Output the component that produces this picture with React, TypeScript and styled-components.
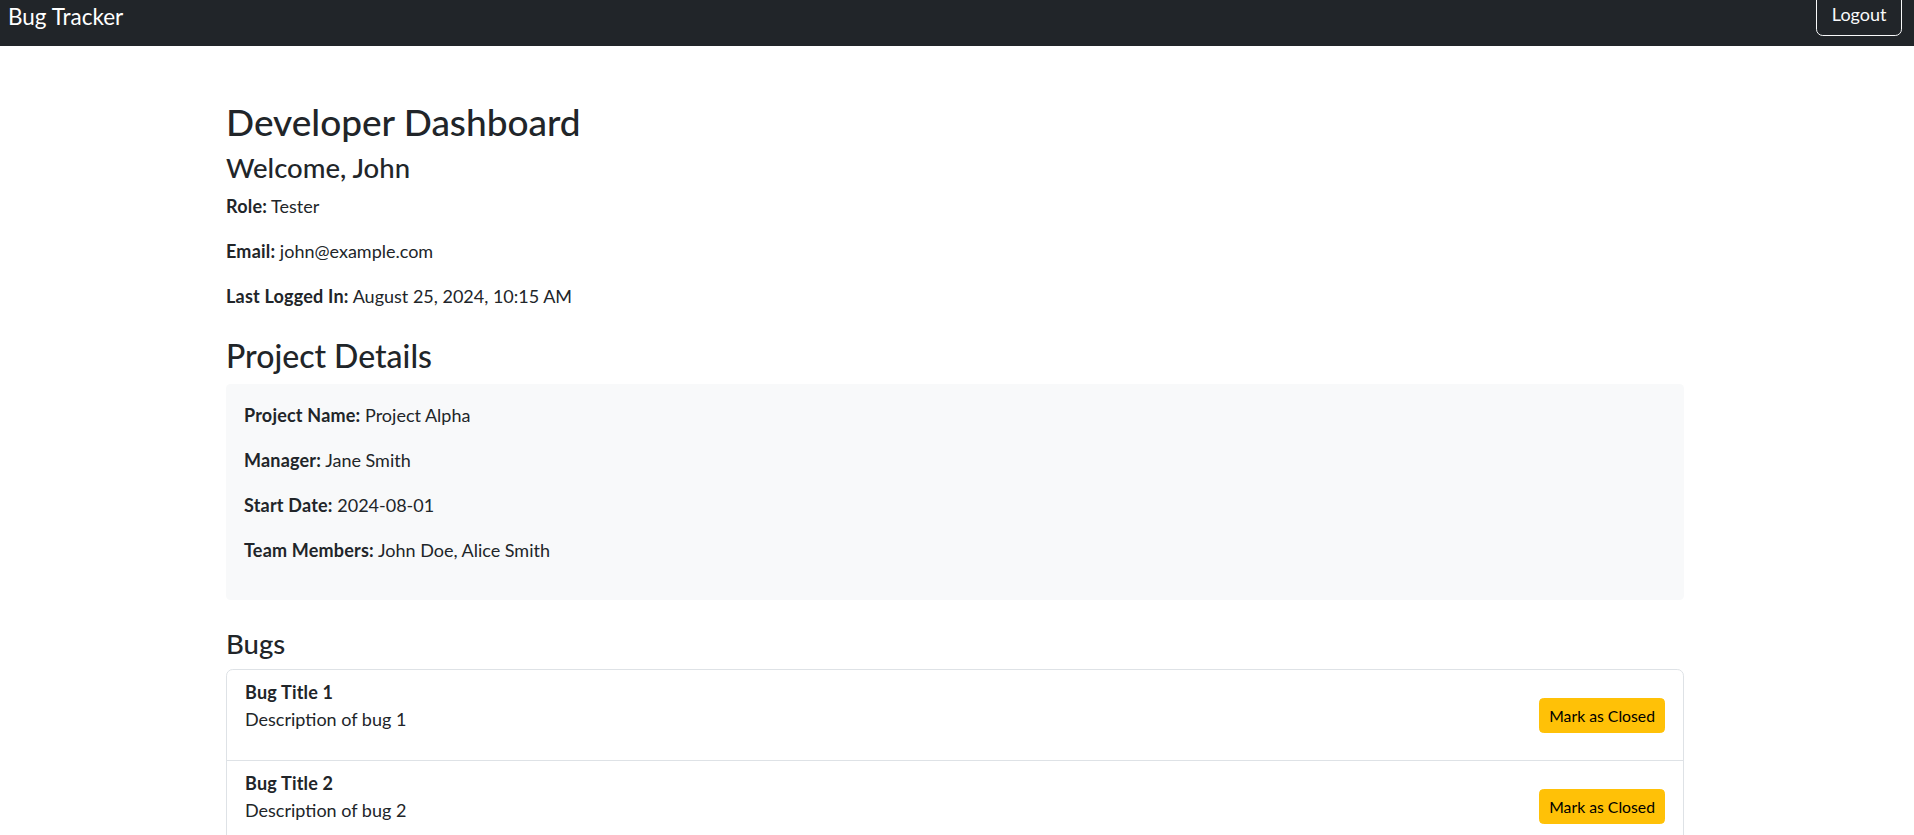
import React from "react";
import styled, { createGlobalStyle } from "styled-components";

const GlobalStyle = createGlobalStyle`
  * { box-sizing: border-box; }
  html, body { margin: 0; padding: 0; background: #ffffff; }
  body {
    font-family: Lato, "Noto Sans", sans-serif;
    font-size: 18px;
    line-height: 27px;
    color: #212529;
    overflow: hidden;
  }
`;

const Navbar = styled.nav`
  display: flex;
  align-items: center;
  justify-content: space-between;
  height: 63px;
  margin-top: -17px;
  padding: 0 12px 0 8px;
  background: #212529;
`;

const Brand = styled.span`
  font-size: 22.5px;
  line-height: 34px;
  color: #ffffff;
  padding-top: 4px;
`;

const OutlineButton = styled.button`
  font-family: inherit;
  font-size: 18px;
  line-height: 27px;
  padding: 6.75px 14.5px;
  color: #f8f9fa;
  background: transparent;
  border: 1px solid #f8f9fa;
  border-radius: 6.75px;
  cursor: pointer;
`;

const Container = styled.main`
  max-width: 1462px;
  margin: 52px auto 0;
  padding-right: 4px;
`;

const Title = styled.h1`
  font-size: 37px;
  line-height: 48px;
  font-weight: 500;
  margin: 0 0 5px;
`;

const SubHeading = styled.h3<{ $top?: number }>`
  font-size: 27.5px;
  line-height: 33px;
  font-weight: 500;
  margin: ${(p) => p.$top ?? 0}px 0 9px;
`;

const SectionHeading = styled.h2`
  font-size: 32px;
  line-height: 38.4px;
  font-weight: 500;
  margin: 27px 0 9px;
`;

const Para = styled.p`
  margin: 0 0 18px;
`;

const Label = styled.strong`
  font-weight: 700;
  letter-spacing: 0.2px;
`;

const DetailsBox = styled.section`
  background: #f8f9fa;
  border-radius: 4.5px;
  padding: 18px;
`;

const BugList = styled.ul`
  list-style: none;
  margin: 0;
  padding: 0;
  border: 1px solid #dee2e6;
  border-radius: 6.75px;
`;

const BugItem = styled.li`
  display: flex;
  align-items: center;
  justify-content: space-between;
  padding: 9px 18px;
  & + & {
    border-top: 1px solid #dee2e6;
  }
`;

const BugText = styled.div`
  display: flow-root;
`;

const BugTitle = styled.strong`
  display: block;
  font-weight: 700;
  letter-spacing: 0.2px;
`;

const WarningButton = styled.button`
  font-family: inherit;
  font-size: 15.75px;
  line-height: 23.6px;
  padding: 4.5px 9px;
  color: #000000;
  background: #ffc107;
  border: 1px solid #ffc107;
  border-radius: 4.5px;
  cursor: pointer;
`;

const bugs = [
  { title: "Bug Title 1", description: "Description of bug 1" },
  { title: "Bug Title 2", description: "Description of bug 2" },
  { title: "Bug Title 3", description: "Description of bug 3" },
];

export default function App() {
  return (
    <>
      <GlobalStyle />
      <Navbar>
        <Brand>Bug Tracker</Brand>
        <OutlineButton>Logout</OutlineButton>
      </Navbar>
      <Container>
        <Title>Developer Dashboard</Title>
        <SubHeading>Welcome, John</SubHeading>
        <Para>
          <Label>Role:</Label> Tester
        </Para>
        <Para>
          <Label>Email:</Label> john@example.com
        </Para>
        <Para>
          <Label>Last Logged In:</Label> August 25, 2024, 10:15 AM
        </Para>

        <SectionHeading>Project Details</SectionHeading>
        <DetailsBox>
          <Para>
            <Label>Project Name:</Label> Project Alpha
          </Para>
          <Para>
            <Label>Manager:</Label> Jane Smith
          </Para>
          <Para>
            <Label>Start Date:</Label> 2024-08-01
          </Para>
          <Para>
            <Label>Team Members:</Label> John Doe, Alice Smith
          </Para>
        </DetailsBox>

        <SubHeading $top={27}>Bugs</SubHeading>
        <BugList>
          {bugs.map((b) => (
            <BugItem key={b.title}>
              <BugText>
                <BugTitle>{b.title}</BugTitle>
                <Para>{b.description}</Para>
              </BugText>
              <WarningButton>Mark as Closed</WarningButton>
            </BugItem>
          ))}
        </BugList>
      </Container>
    </>
  );
}
